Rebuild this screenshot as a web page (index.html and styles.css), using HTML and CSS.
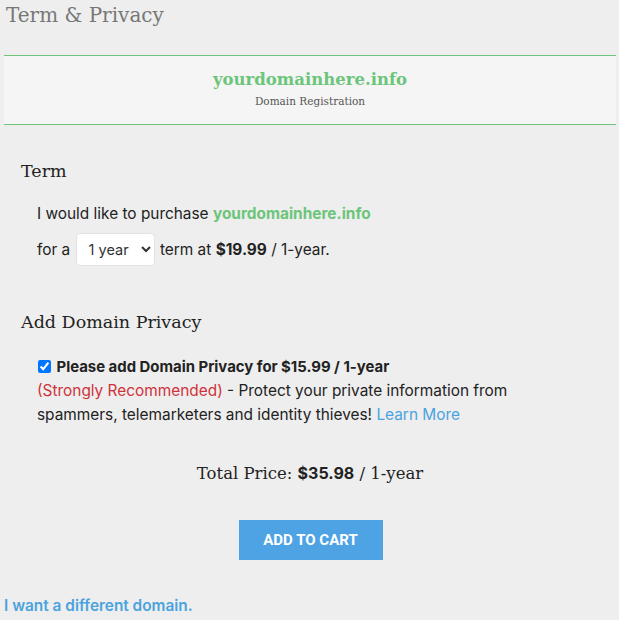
FILE: index.html
```html
<!DOCTYPE html>
<html lang="en">
<head>
    <meta charset="UTF-8">
    <meta name="viewport" content="width=device-width, initial-scale=1.0">
    <title>Term &amp; Privacy</title>
    <link rel="stylesheet" href="styles.css">
</head>
<body>
    <div class="page">
        <h2 class="page-title">Term &amp; Privacy</h2>

        <div class="domain-box">
            <div class="domain-name">yourdomainhere.info</div>
            <div class="domain-sub">Domain Registration</div>
        </div>

        <div class="section">
            <h3 class="section-title">Term</h3>
            <div class="section-body">
                <p>I would like to purchase <span class="green">yourdomainhere.info</span></p>
                <p class="term-row">for a
                    <select class="term-select">
                        <option>1 year</option>
                        <option>2 years</option>
                        <option>3 years</option>
                    </select>
                    term at <b>$19.99</b> / 1-year.</p>
            </div>
        </div>

        <div class="section">
            <h3 class="section-title">Add Domain Privacy</h3>
            <div class="section-body">
                <label class="privacy-label"><input type="checkbox" checked> Please add Domain Privacy for $15.99 / 1-year</label>
                <p class="privacy-text"><span class="red">(Strongly Recommended)</span> - Protect your private information from spammers, telemarketers and identity thieves! <a href="#" class="link">Learn More</a></p>
            </div>
        </div>

        <div class="total">Total Price: <b>$35.98</b> / 1-year</div>

        <div class="cart">
            <button class="cart-btn">Add to Cart</button>
        </div>

        <a href="#" class="link other">I want a different domain.</a>
    </div>
</body>
</html>
```

FILE: styles.css
```css
* {
    margin: 0;
    padding: 0;
    box-sizing: border-box;
}

body {
    background: #eeeeee;
    font-family: Inter, Roboto, sans-serif;
    font-size: 15.4px;
    color: #222;
}

.page {
    padding: 0 3px 0 4px;
}

.page-title {
    font-family: "DejaVu Serif", serif;
    font-weight: normal;
    font-size: 20px;
    color: #777;
    padding: 3px 0 0 2px;
    height: 55px;
}

.domain-box {
    background: #f5f5f5;
    border-top: 1px solid #6cc57a;
    border-bottom: 1px solid #6cc57a;
    text-align: center;
    padding: 14px 0 14px;
    height: 70px;
}

.domain-name {
    font-family: "DejaVu Serif", serif;
    font-weight: bold;
    font-size: 16.5px;
    color: #6cc57a;
}

.domain-sub {
    font-family: "DejaVu Serif", serif;
    font-size: 10.5px;
    color: #555;
    margin-top: 6px;
}

.section {
    padding: 0 80px 0 17px;
}

.section-title {
    font-family: "DejaVu Serif", serif;
    font-weight: normal;
    font-size: 17.5px;
    color: #222;
    margin-top: 36px;
    margin-bottom: 21px;
}

.section + .section .section-title {
    margin-top: 46px;
    margin-bottom: 23px;
}

.section-body {
    padding-left: 16px;
}

.section-body p {
    line-height: 24px;
}

.green {
    color: #6cc57a;
    font-weight: bold;
}

.term-row {
    margin-top: 7px;
}

.term-select {
    font-family: inherit;
    font-size: 14.5px;
    height: 33px;
    width: 79px;
    padding: 0 4px 0 8px;
    background: #fff;
    border: 1px solid #e2e2e2;
    border-radius: 4px;
    color: #333;
    margin: 0 1px;
}

.privacy-label {
    display: block;
    font-weight: bold;
    font-size: 14.9px;
    line-height: 24px;
}

.privacy-label input {
    width: 13px;
    height: 13px;
    margin: 0 2px 0 1px;
    vertical-align: -1px;
}

.red {
    color: #d0323a;
}

.link {
    color: #4aa3df;
    text-decoration: none;
}

.total {
    text-align: center;
    font-family: "DejaVu Serif", serif;
    font-size: 16.5px;
    margin-top: 36px;
}

.total b {
    font-family: Inter, Roboto, sans-serif;
    font-size: 16px;
}

.cart {
    text-align: center;
    margin-top: 37px;
}

.cart-btn {
    background: #4da3e3;
    color: #fff;
    border: none;
    font-family: Roboto, sans-serif;
    font-weight: bold;
    font-size: 15px;
    text-transform: uppercase;
    width: 144px;
    height: 40px;
    margin-left: 1px;
    cursor: pointer;
}

.other {
    display: block;
    margin-top: 36px;
    font-weight: 600;
}
```
